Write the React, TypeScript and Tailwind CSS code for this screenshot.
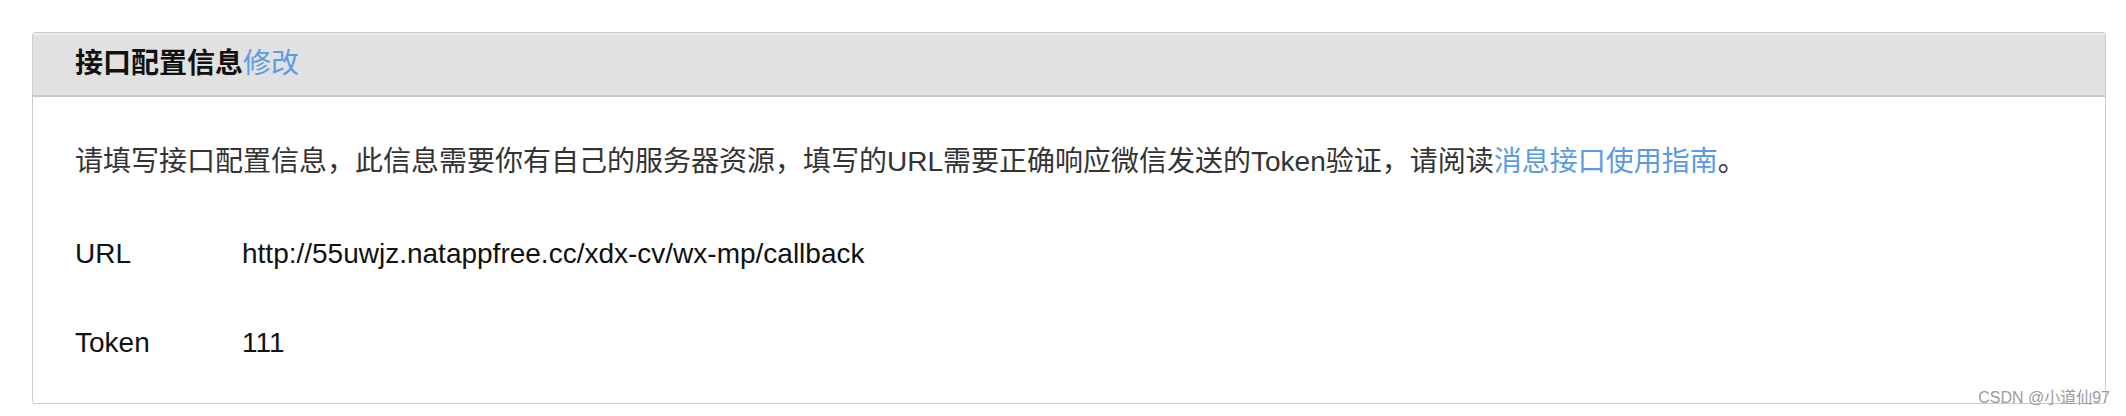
import React from "react";

const cjk = "font-['Helvetica_Neue','Liberation_Sans','Noto_Sans_CJK_SC',sans-serif]";

export default function App() {
  return (
    <div className={`relative w-[2126px] h-[416px] bg-white ${cjk}`}>
      <div className="pt-[32px] pl-[32px]">
        <div className="w-[2074px] border border-[#cccccc] rounded-[3px] overflow-hidden bg-white">
          <div className="h-[64px] bg-[#e1e1e1] border-b-2 border-[#c8c8c8] shadow-[inset_0_2px_0_#ebebeb] flex items-center pl-[42px]">
            <span className="text-[28px] font-bold text-[#111]">接口配置信息</span>
            <a className="text-[28px] text-[#5a9be3]">修改</a>
          </div>
          <div className="pl-[42px] pb-[40px] text-[28px] text-[#333]">
            <p className="mt-[45px] leading-[40px]">
              请填写接口配置信息，此信息需要你有自己的服务器资源，填写的URL需要正确响应微信发送的Token验证，请阅读
              <a className="text-[#5a9be3]">消息接口使用指南</a>。
            </p>
            <div className="mt-[52px] flex leading-[40px] text-[#111] font-['Liberation_Sans',sans-serif]">
              <span className="w-[167px]">URL</span>
              <span>http://55uwjz.natappfree.cc/xdx-cv/wx-mp/callback</span>
            </div>
            <div className="mt-[49px] flex leading-[40px] text-[#111] font-['Liberation_Sans',sans-serif]">
              <span className="w-[167px]">Token</span>
              <span>111</span>
            </div>
          </div>
        </div>
      </div>
      <span className="absolute right-[16px] bottom-[8px] text-[16px] leading-[20px] text-[#9a9a9a] font-['Liberation_Sans','Noto_Sans_CJK_SC',sans-serif]">
        CSDN @小道仙97
      </span>
    </div>
  );
}
